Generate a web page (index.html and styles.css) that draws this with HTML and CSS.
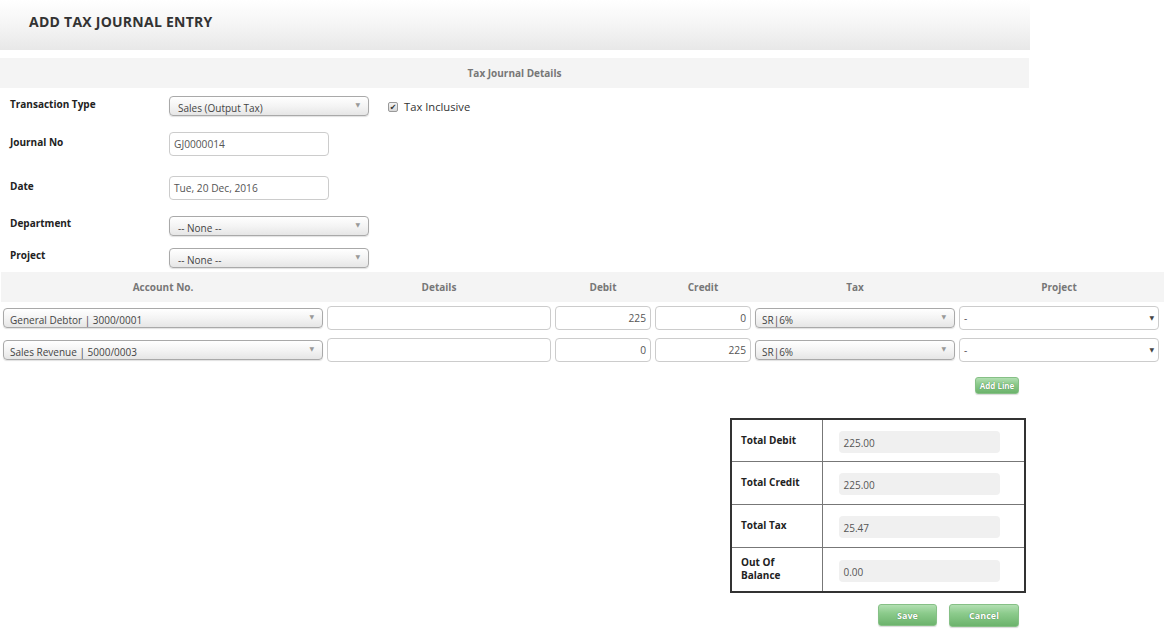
FILE: index.html
```html
<!DOCTYPE html>
<html>
<head>
<meta charset="utf-8">
<link rel="stylesheet" href="styles.css">
</head>
<body>
<div class="page">
  <div class="title-bar"><h1>ADD TAX JOURNAL ENTRY</h1></div>
  <div class="section-bar">Tax Journal Details</div>

  <div class="form">
    <div class="frow r-type">
      <label class="flabel">Transaction Type</label>
      <div class="fselect w200"><span>Sales (Output Tax)</span><i class="arr">▼</i></div>
      <div class="check"><span class="cbox">✔</span><span class="ctext">Tax Inclusive</span></div>
    </div>
    <div class="frow r-journal">
      <label class="flabel">Journal No</label>
      <div class="finput w160">GJ0000014</div>
    </div>
    <div class="frow r-date">
      <label class="flabel">Date</label>
      <div class="finput w160">Tue, 20 Dec, 2016</div>
    </div>
    <div class="frow r-dept">
      <label class="flabel">Department</label>
      <div class="fselect w200"><span>-- None --</span><i class="arr">▼</i></div>
    </div>
    <div class="frow r-proj">
      <label class="flabel">Project</label>
      <div class="fselect w200"><span>-- None --</span><i class="arr">▼</i></div>
    </div>
  </div>

  <div class="lines">
    <div class="lhead">
      <div class="c-acc">Account No.</div>
      <div class="c-det">Details</div>
      <div class="c-deb">Debit</div>
      <div class="c-cre">Credit</div>
      <div class="c-tax">Tax</div>
      <div class="c-prj">Project</div>
    </div>
    <div class="lrow">
      <div class="c-acc"><div class="fselect full"><span>General Debtor | 3000/0001</span><i class="arr">▼</i></div></div>
      <div class="c-det"><div class="finput full"></div></div>
      <div class="c-deb"><div class="finput full num">225</div></div>
      <div class="c-cre"><div class="finput full num">0</div></div>
      <div class="c-tax"><div class="fselect full"><span>SR|6%</span><i class="arr">▼</i></div></div>
      <div class="c-prj"><div class="finput full pselect"><span>-</span><i class="arr dark">▼</i></div></div>
    </div>
    <div class="lrow">
      <div class="c-acc"><div class="fselect full"><span>Sales Revenue | 5000/0003</span><i class="arr">▼</i></div></div>
      <div class="c-det"><div class="finput full"></div></div>
      <div class="c-deb"><div class="finput full num">0</div></div>
      <div class="c-cre"><div class="finput full num">225</div></div>
      <div class="c-tax"><div class="fselect full"><span>SR|6%</span><i class="arr">▼</i></div></div>
      <div class="c-prj"><div class="finput full pselect"><span>-</span><i class="arr dark">▼</i></div></div>
    </div>
    <div class="addline-row"><button class="gbtn addline">Add Line</button></div>
  </div>

  <div class="totals-wrap">
    <table class="totals">
      <tr><th>Total Debit</th><td><div class="ro">225.00</div></td></tr>
      <tr><th>Total Credit</th><td><div class="ro">225.00</div></td></tr>
      <tr><th>Total Tax</th><td><div class="ro">25.47</div></td></tr>
      <tr class="tall"><th>Out Of<br>Balance</th><td><div class="ro">0.00</div></td></tr>
    </table>
    <div class="actions">
      <button class="gbtn save">Save</button>
      <button class="gbtn cancel">Cancel</button>
    </div>
  </div>
</div>
</body>
</html>
```

FILE: styles.css
```css
* { box-sizing: border-box; }
html, body { margin: 0; padding: 0; background: #fff; }
body {
  font-family: "Open Sans", "Noto Sans", "DejaVu Sans", sans-serif;
  color: #333;
  width: 1171px;
  height: 635px;
  overflow: hidden;
}
.page { width: 1171px; }

.title-bar {
  width: 1030px;
  height: 50px;
  background: linear-gradient(to bottom, #ffffff 0%, #f6f6f6 45%, #e8e8e8 100%);
  padding-left: 29px;
  display: flex;
  align-items: flex-start;
}
.title-bar h1 {
  margin: 0;
  padding-top: 12px;
  font-size: 14px;
  font-weight: 700;
  color: #333;
  letter-spacing: 0.25px;
  line-height: 20px;
}

.section-bar {
  margin-top: 8px;
  width: 1029px;
  height: 30px;
  background: #f4f4f4;
  text-align: center;
  font-size: 10px;
  font-weight: 700;
  color: #777;
  line-height: 30px;
  padding-left: 0;
}

.form { padding-left: 10px; }
.frow { display: flex; align-items: flex-start; }
.flabel {
  width: 159px;
  font-size: 10px;
  font-weight: 700;
  color: #222;
  line-height: 14px;
}
.r-type { margin-top: 8px; height: 20px; }
.r-type .flabel { padding-top: 1px; }
.r-journal { margin-top: 16px; height: 24px; }
.r-journal .flabel { padding-top: 3px; }
.r-date { margin-top: 20px; height: 24px; }
.r-date .flabel { padding-top: 3px; }
.r-dept { margin-top: 16px; height: 20px; }
.r-dept .flabel { padding-top: 0px; }
.r-proj { margin-top: 12px; height: 20px; }
.r-proj .flabel { padding-top: 0px; }

.fselect {
  height: 20px;
  border: 1px solid #a9a9a9;
  border-radius: 4px;
  background: linear-gradient(to bottom, #ffffff 0%, #f4f4f4 50%, #e6e6e6 100%);
  box-shadow: 0 1px 1px rgba(0,0,0,0.12);
  display: flex;
  align-items: center;
  justify-content: space-between;
  font-size: 10px;
  color: #444;
  padding: 4px 8px 0 8px;
  line-height: 14px;
}
.lrow .fselect { padding-left: 6px; }
.fselect span { white-space: nowrap; }
.arr {
  font-style: normal;
  font-size: 6px;
  color: #999;
  line-height: 6px;
  margin-top: -6px;
}
.arr.dark { color: #444; margin-top: 0; }
.w200 { width: 200px; }
.w160 { width: 160px; }

.finput {
  height: 24px;
  border: 1px solid #ccc;
  border-radius: 4px;
  background: #fff;
  font-size: 10.2px;
  color: #555;
  padding: 0 4px;
  line-height: 23px;
  white-space: nowrap;
}
.finput.num { text-align: right; }
.pselect {
  display: flex;
  justify-content: space-between;
  align-items: center;
  padding: 0 4px 0 4px;
}
.pselect span { color: #555; }

.check {
  margin-left: 19px;
  display: flex;
  align-items: center;
  padding-top: 3px;
}
.cbox {
  width: 10px;
  height: 10px;
  border: 1px solid #999;
  border-radius: 2px;
  background: linear-gradient(#f4f4f4, #d8d8d8);
  font-size: 8px;
  line-height: 8px;
  text-align: center;
  color: #333;
}
.ctext {
  margin-left: 6px;
  font-size: 11.2px;
  color: #333;
  line-height: 14px;
  padding-top: 1px;
}

.lines { margin-top: 4px; padding-left: 1px; }
.lhead {
  width: 1163px;
  height: 30px;
  background: #f4f4f4;
  display: flex;
  font-size: 10px;
  font-weight: 700;
  color: #777;
  line-height: 30px;
  text-align: center;
}
.lhead > div, .lrow > div { flex: none; }
.lhead .c-acc, .lrow .c-acc { width: 324px; padding: 0 2px; }
.lhead .c-det, .lrow .c-det { width: 228px; padding: 0 2px; }
.lhead .c-deb, .lrow .c-deb { width: 100px; padding: 0 2px; }
.lhead .c-cre, .lrow .c-cre { width: 100px; padding: 0 2px; }
.lhead .c-tax, .lrow .c-tax { width: 204px; padding: 0 2px; }
.lhead .c-prj, .lrow .c-prj { width: 204px; padding: 0 2px; }
.lrow { display: flex; margin-top: 4px; height: 24px; }
.lrow + .lrow { margin-top: 8px; }
.lrow .fselect.full { margin-top: 2px; }
.full { width: 100%; }

.addline-row {
  width: 1018px;
  display: flex;
  justify-content: flex-end;
  margin-top: 15px;
}

.gbtn {
  border: 1px solid #86c086;
  border-radius: 3px;
  background: linear-gradient(to bottom, #b2dfb2 0%, #8ccb8c 40%, #6cb36c 100%);
  color: #fff;
  font-family: "Open Sans", "Noto Sans", sans-serif;
  font-weight: 700;
  text-shadow: 0 0 1px rgba(40,90,40,0.8);
  padding: 0;
  cursor: pointer;
  box-shadow: 0 1px 1px rgba(0,0,0,0.15);
}
.addline { width: 44px; height: 17px; font-size: 8px; line-height: 15px; }

.totals-wrap { width: 1026px; display: flex; flex-direction: column; align-items: flex-end; margin-top: 24px; }
.totals {
  width: 296px;
  border-collapse: collapse;
  border: 2px solid #333;
}
.totals tr { height: 43px; }
.totals tr:first-child { height: 42px; }
.totals tr.tall { height: 45px; }
.totals th {
  width: 91px;
  text-align: left;
  font-size: 10px;
  font-weight: 700;
  color: #222;
  padding: 0 0 0 9px;
  border: 1px solid #777;
  line-height: 13px;
  vertical-align: middle;
}
.totals td {
  border: 1px solid #777;
  padding: 3px 0 0 16px;
  vertical-align: middle;
}
.ro {
  width: 161px;
  height: 22px;
  background: #f0f0f0;
  border-radius: 4px;
  font-size: 10px;
  color: #555;
  padding-left: 5px;
  line-height: 24px;
}

.actions {
  display: flex;
  gap: 12px;
  margin-top: 11px;
  margin-right: 7px;
}
.save { width: 59px; height: 22px; font-size: 9px; }
.cancel { width: 70px; height: 23px; font-size: 9px; }
```
